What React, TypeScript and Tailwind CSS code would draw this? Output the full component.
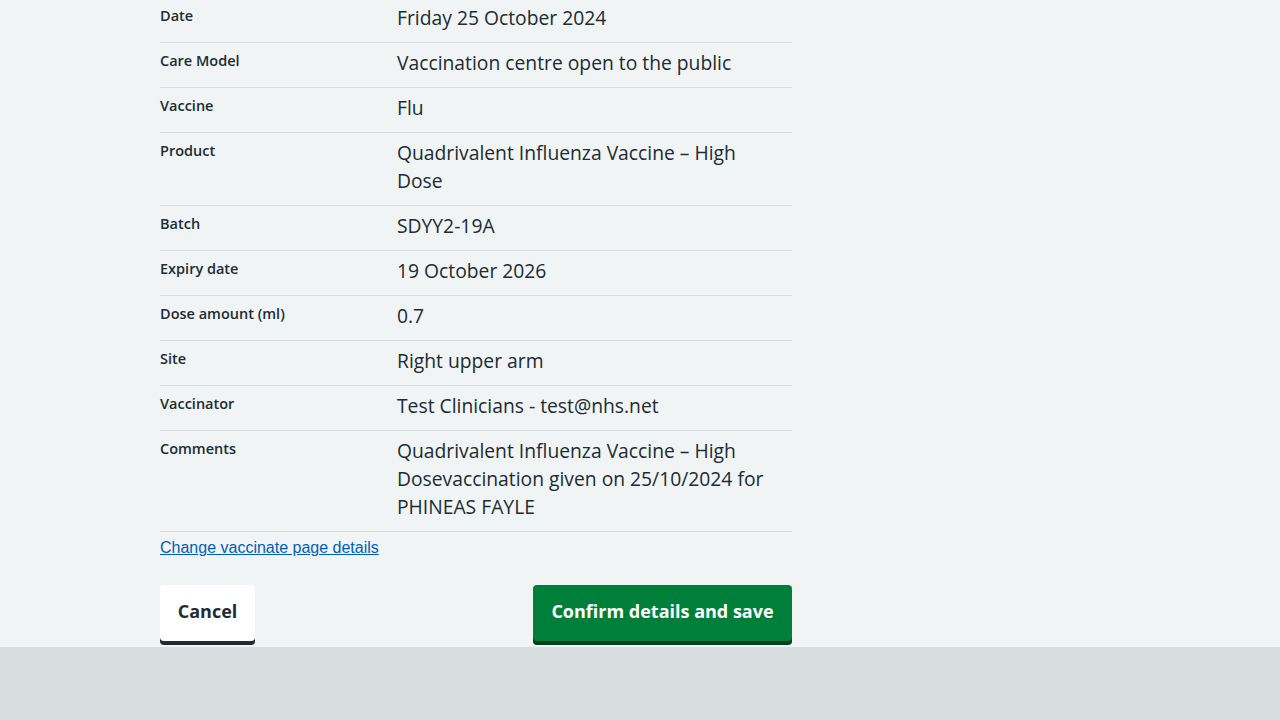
const rows: { label: string; value: React.ReactNode }[] = [
  { label: "Date", value: "Friday 25 October 2024" },
  { label: "Care Model", value: "Vaccination centre open to the public" },
  { label: "Vaccine", value: "Flu" },
  {
    label: "Product",
    value: (
      <>
        Quadrivalent Influenza Vaccine – High
        <br />
        Dose
      </>
    ),
  },
  { label: "Batch", value: "SDYY2-19A" },
  { label: "Expiry date", value: "19 October 2026" },
  { label: "Dose amount (ml)", value: "0.7" },
  { label: "Site", value: "Right upper arm" },
  { label: "Vaccinator", value: "Test Clinicians - test@nhs.net" },
  {
    label: "Comments",
    value: (
      <>
        Quadrivalent Influenza Vaccine – High
        <br />
        Dosevaccination given on 25/10/2024 for
        <br />
        PHINEAS FAYLE
      </>
    ),
  },
];

export default function App() {
  return (
    <div className="min-h-[720px] flex flex-col bg-[#f0f4f5] font-['Open_Sans',sans-serif] text-[#212b32]">
      <main className="w-[960px] mx-auto flex-1">
        <div className="w-[632px] mt-[-2px]">
          <dl>
            {rows.map((r) => (
              <div key={r.label} className="flex items-start border-b border-[#d8dde0]">
                <dt className="w-[237px] shrink-0 pt-[8px] text-[14.5px] leading-[20px] font-semibold">{r.label}</dt>
                <dd className="flex-1 pt-[6px] pb-[10px] text-[19.3px] leading-[28px]">{r.value}</dd>
              </div>
            ))}
          </dl>
          <div className="pt-[3px]">
            <a
              href="#"
              className="font-['Liberation_Sans',Arial,sans-serif] text-[16px] leading-[18px] text-[#005eb8] underline"
            >
              Change vaccinate page details
            </a>
          </div>
          <div className="flex justify-between mt-[26px] mb-[6px]">
            <button className="w-[95px] h-[56px] pb-[4px] bg-white rounded-[4px] shadow-[0_4px_0_#212b32] text-[18px] font-bold text-[#212b32] flex items-center justify-center">
              Cancel
            </button>
            <button className="w-[259px] h-[56px] pb-[4px] bg-[#007f3b] rounded-[4px] shadow-[0_4px_0_#00401e] text-[18px] font-bold text-white flex items-center justify-center">
              Confirm details and save
            </button>
          </div>
        </div>
      </main>
      <footer className="h-[73px] bg-[#d8dde0]" />
    </div>
  );
}
